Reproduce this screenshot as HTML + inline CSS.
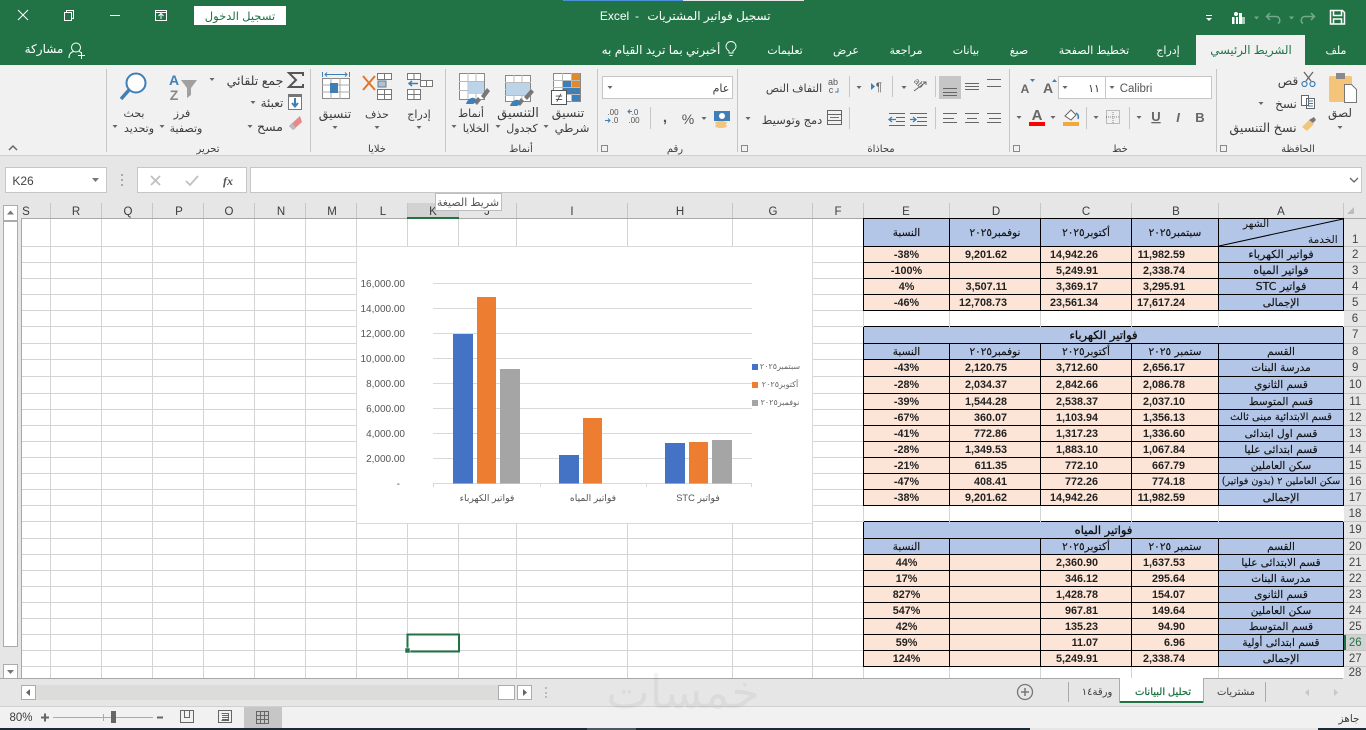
<!DOCTYPE html>
<html lang="ar"><head><meta charset="utf-8"><title>Excel</title>
<style>
html,body{margin:0;padding:0;width:1366px;height:730px;overflow:hidden;background:#e6e6e6}
body{position:relative;font-family:"Liberation Sans","DejaVu Sans",sans-serif}
svg{position:absolute;left:0;top:0}
svg text{font-family:"Liberation Sans","DejaVu Sans",sans-serif;font-size:11px;fill:#3c3c3c;text-anchor:middle;direction:rtl}
svg .w text,svg text.w{fill:#fff}
svg .g text{font-size:10px;fill:#555}
#wrap{position:absolute;left:863px;top:218px;width:503px;height:460px;overflow:hidden}
table{border-collapse:collapse;table-layout:fixed;width:503px;position:absolute;left:0;top:0}
td{padding:0;border:1px solid #000;text-align:center;overflow:hidden;white-space:nowrap;font-size:10.5px;line-height:12px;color:#111;vertical-align:middle}
td.h{background:#b4c6e7;font-family:"DejaVu Sans",sans-serif;-webkit-text-stroke:.15px #111}
td.n{background:#fce4d6;text-align:right;padding-right:33px;font:bold 10.8px/12px "Liberation Sans",sans-serif;color:#222}
td.p{background:#fce4d6;font:bold 10.8px/12px "Liberation Sans",sans-serif;color:#222}
td.e{background:#fce4d6}
td.b{background:#fff;border:none;border-left:1px solid #d4d4d4}
td.r{background:#e6e6e6;border:none;border-bottom:1px solid #c6c6c6;font:11.5px/12px "Liberation Sans",sans-serif;color:#444}
td.s{background:#d2d2d2;color:#217346;box-shadow:inset 2px 0 0 #217346}
td.t{font-size:11.5px;-webkit-text-stroke:.35px #111}
.o{position:absolute;font:10.5px/12px "DejaVu Sans",sans-serif;color:#111;white-space:nowrap}
</style></head><body>
<svg width="1366" height="730" viewBox="0 0 1366 730" xmlns="http://www.w3.org/2000/svg">
<defs><path id="c" d="M-2.5 0h5l-2.5 3z" fill="#666"/></defs>
<!-- title bar -->
<rect width="1366" height="65" fill="#217346"/>
<rect x="563" width="120" height="1" fill="#4a90d9"/><rect x="683" width="121" height="1" fill="#e6e6e6"/>
<rect x="1196" y="35" width="109" height="30" fill="#f1f1f1"/>
<rect x="194" y="6" width="92" height="19" fill="#fff"/>
<text x="240" y="20" style="fill:#217346;font-size:11.5px">تسجيل الدخول</text>
<text x="709" y="20" class="w" style="font-size:12px">تسجيل فواتير المشتريات</text><text x="637" y="20" class="w" style="font-size:12px">-</text><text x="614.500" y="20" class="w" style="font-size:12px;direction:ltr">Excel</text>
<g class="w">
<text x="1336" y="54">ملف</text><text x="1168" y="54">إدراج</text><text x="1094" y="54">تخطيط الصفحة</text><text x="1019" y="54">صيغ</text><text x="966" y="54">بيانات</text><text x="906" y="54">مراجعة</text><text x="846" y="54">عرض</text><text x="785" y="54">تعليمات</text><text x="661" y="54" style="font-size:12px">أخبرني بما تريد القيام به</text><text x="44" y="53" style="font-size:12px">مشاركة</text>
</g>
<text x="1251" y="54" style="fill:#217346;font-size:11.700px">الشريط الرئيسي</text>
<g fill="none" stroke="#fff" stroke-width="1">
<path d="M18 10l10 10M28 10l-10 10"/>
<path d="M64.500 12.500h7v8h-7zM66.500 12.500v-2h7v8h-2"/>
<path d="M110 15.500h10"/>
<path d="M155.500 10.500h11v10h-11zM155.500 12.500h11M161 19v-5M158.500 16l2.500-2.500 2.500 2.500"/>
<path d="M1330.500 10.500h12l2 2v11.500h-14zM1333.500 10.500v5h8v-5M1333.500 24v-5h8v5" stroke-width="1.500"/>
<path d="M1270 13l-3.500 3.500 3.500 3.500M1267 16.500h9c4 0 5 5 2 7" stroke="#74a98c" stroke-width="1.500"/>
<path d="M1311 13l3.500 3.500-3.500 3.500M1314 16.500h-9c-4 0-5 5-2 7" stroke="#74a98c" stroke-width="1.500"/>
<path d="M729 53v-2c-1.500-1-3-2.500-3-4.500a5 5 0 0 1 10 0c0 2-1.500 3.500-3 4.500v2zM729.500 55.500h3" stroke-width=".9"/>
<circle cx="76" cy="47.500" r="4.500"/><path d="M69 58c0-4 2-6 5-6.500M79 51.500c1 .3 2 1 2.500 1.500M78 55.500h7M81.500 52v7"/>
</g>
<g fill="#fff">
<rect x="1239" y="13" width="3" height="11"/><rect x="1242" y="17" width="3" height="7" fill="#a8c9b6"/><rect x="1232" y="17" width="2.500" height="7"/><circle cx="1236" cy="14" r="2"/><rect x="1236" y="17" width="2" height="7"/>
<path d="M1206 18h6l-3 3z"/><rect x="1206" y="15" width="6" height="1"/>
<path d="M1254 16.500h5l-2.500 3zM1289 16.500h5l-2.500 3z" fill="#74a98c"/>
</g>
<!-- ribbon -->
<rect y="65" width="1366" height="91" fill="#f1f1f1"/>
<rect y="155" width="1366" height="1" fill="#d0d0d0"/>
<path d="M106.500 69v83M310.500 69v83M445.500 69v83M597.500 69v83M737.500 69v83M1009.500 69v83M1216.500 69v83" stroke="#c6c6c6"/>
<text x="208" y="152" style="font-size:10px">تحرير</text><text x="377" y="152" style="font-size:10px">خلايا</text><text x="521" y="152" style="font-size:10px">أنماط</text><text x="675" y="152" style="font-size:10px">رقم</text><text x="881" y="152" style="font-size:10px">محاذاة</text><text x="1120" y="152" style="font-size:10px">خط</text><text x="1298" y="152" style="font-size:10px">الحافظة</text>
<path d="M9 150l4-4 4 4" fill="none" stroke="#666" stroke-width="1.500"/>
<path d="M601.500 145.500h6v6h-6zM741.500 145.500h6v6h-6zM1013.500 145.500h6v6h-6zM1220.500 145.500h6v6h-6z" fill="none" stroke="#888"/>
<!-- clipboard -->
<rect x="1329" y="76" width="23" height="26" rx="1.500" fill="#f4c47a"/><rect x="1336" y="73" width="9" height="6" fill="#8a8a8a"/>
<path d="M1344.500 84.500h7l5 5v13h-12z" fill="#fff" stroke="#777"/>
<text x="1340" y="117" style="font-size:12px">لصق</text><use href="#c" x="1340" y="126"/>
<text x="1288" y="85" style="font-size:12px">قص</text><text x="1286" y="108" style="font-size:12px">نسخ</text><use href="#c" x="1261" y="102"/><text x="1263" y="132" style="font-size:12.700px">نسخ التنسيق</text>
<path d="M1304 72l7 9M1313 72l-7 9" stroke="#666" stroke-width="1.300" fill="none"/><circle cx="1304.500" cy="84" r="2.500" fill="none" stroke="#3f7fb6" stroke-width="1.200"/><circle cx="1312.500" cy="84" r="2.500" fill="none" stroke="#3f7fb6" stroke-width="1.200"/>
<path d="M1301.500 95.500h7v10h-7zM1306.500 98.500h8v10h-8z" fill="#fff" stroke="#666"/><path d="M1308 101h5M1308 103.500h5M1308 106h5" stroke="#3f7fb6"/>
<path d="M1302 127l7-7 5 4-7 7z" fill="#f2c57c"/><path d="M1309 120l5-3 2 3-3 3z" fill="#777"/>
<!-- font -->
<rect x="1058.500" y="76.500" width="47" height="22" fill="#fff" stroke="#c6c6c6"/><rect x="1105.500" y="76.500" width="106" height="22" fill="#fff" stroke="#c6c6c6"/>
<text x="1136" y="92" style="font-size:11.500px;fill:#555">Calibri</text><text x="1094" y="92" style="font-size:11px">١١</text>
<use href="#c" x="1112" y="86"/><use href="#c" x="1065" y="86"/>
<text x="1025" y="93" style="font-size:12px;font-weight:bold;fill:#666">A</text><text x="1048" y="93" style="font-size:14px;font-weight:bold;fill:#666">A</text>
<path d="M1030 82l2.500-3 2.500 3z" fill="#3f7fb6" transform="rotate(180 1032.500 80.500)"/><path d="M1052 82l2.500-3 2.500 3z" fill="#3f7fb6"/>
<text x="1200" y="122" style="font-size:13px;font-weight:bold;fill:#666">B</text><text x="1178" y="122" style="font-size:13px;font-style:italic;font-weight:bold;fill:#666">I</text><text x="1156" y="121" style="font-size:13px;font-weight:bold;fill:#666;text-decoration:underline">U</text>
<use href="#c" x="1139" y="116"/><use href="#c" x="1096" y="116"/><use href="#c" x="1053" y="116"/><use href="#c" x="1019" y="116"/>
<path d="M1129.500 107v22M1086.500 107v22" stroke="#c6c6c6"/>
<rect x="1106.500" y="110.500" width="13" height="13" fill="none" stroke="#888" stroke-dasharray="1 1"/><path d="M1113 110v13M1106 117h13" stroke="#888" stroke-dasharray="1 1"/>
<path d="M1065 116l6-6 5 5-5 5z" fill="#fff" stroke="#666"/><path d="M1076 113c2 1 3 3 2 6" stroke="#3f7fb6" stroke-width="1.500" fill="none"/><rect x="1063" y="122" width="16" height="4" fill="#f2a93b"/>
<text x="1037" y="120" style="font-size:15px;font-weight:bold;fill:#666">A</text><rect x="1029" y="122" width="16" height="4" fill="#f00"/>
<!-- alignment -->
<rect x="939" y="76" width="22" height="23" fill="#c6c6c6"/>
<path d="M987 79.500h14M987 86.500h14M965 83.500h14M965 86.500h14M965 89.500h14M943 88.500h14M943 92.500h14M943 95.500h14" stroke="#666"/>
<path d="M987 113.500h14M989 118.500h12M987 122.500h14M965 113.500h14M967 118.500h10M965 122.500h14M943 113.500h14M943 118.500h11M943 122.500h14" stroke="#666"/>
<path d="M935.500 76v21M935.500 107v22M892.500 76v21M849.500 76v21M849.500 107v22" stroke="#c6c6c6"/>
<text x="919" y="86" transform="rotate(45 919 83)" style="font-size:9px;fill:#666;direction:ltr">ab</text><path d="M914 91l12-9M923 82h3v3" fill="none" stroke="#666"/>
<use href="#c" x="904" y="86"/><use href="#c" x="859" y="86"/><use href="#c" x="748" y="117"/>
<path d="M871 83l4 3.500-4 3.500z" fill="#3f7fb6"/><text x="879" y="91" style="font-size:12px;fill:#666;direction:ltr">¶</text>
<text x="794" y="92" style="font-size:11px">التفاف النص</text>
<text x="792" y="124" style="font-size:11.500px">دمج وتوسيط</text>
<text x="833" y="85" style="font-size:9px;fill:#555">ab</text><text x="831" y="93" style="font-size:9px;fill:#555">c</text><path d="M838 88v4h-3" fill="none" stroke="#3f7fb6"/>
<rect x="827.500" y="110.500" width="14" height="14" fill="none" stroke="#666"/><path d="M828 114.500h13M828 120.500h13" stroke="#666"/><path d="M830 117.500h9" stroke="#3f7fb6"/>
<path d="M910 113.500h17M917 117.500h10M917 121.500h10M910 125.500h17M889 113.500h16M896 117.500h9M896 121.500h9M889 125.500h16" stroke="#666"/>
<path d="M910 119.500h6M913 117l3 2.500-3 2.500M896 119.500h-7M892 117l-3 2.500 3 2.500" stroke="#3f7fb6" stroke-width="1.300" fill="none"/>
<!-- number -->
<rect x="602.500" y="76.500" width="130" height="22" fill="#fff" stroke="#c6c6c6"/><use href="#c" x="610" y="86"/><text x="721" y="92">عام</text>
<rect x="714" y="111" width="16" height="10" fill="#3f7fb6"/><circle cx="722" cy="116" r="3" fill="#fff"/><ellipse cx="721" cy="123" rx="6" ry="2" fill="#f2c57c"/><ellipse cx="721" cy="126" rx="6" ry="2" fill="#f2c57c"/>
<use href="#c" x="704" y="117"/>
<text x="688" y="124" style="font-size:14px;fill:#555">%</text><text x="665" y="122" style="font-size:15px;font-weight:bold;fill:#555">,</text>
<path d="M650.500 107v22" stroke="#c6c6c6"/>
<text x="635" y="115" style="font-size:8px;fill:#555;direction:ltr">.0</text><text x="634" y="123" style="font-size:8px;fill:#555;direction:ltr">.00</text><text x="613" y="115" style="font-size:8px;fill:#555;direction:ltr">.00</text><text x="615" y="123" style="font-size:8px;fill:#555;direction:ltr">.0</text>
<path d="M632 111.500h-4M630 109.500l-2 2 2 2M605 120.500h5M608 118.500l2 2-2 2" stroke="#3f7fb6" fill="none"/>
<!-- styles -->
<g fill="#fff" stroke="#888"><rect x="553.500" y="73.500" width="27" height="28"/><rect x="505.500" y="75.500" width="25" height="26"/><rect x="459.500" y="73.500" width="25" height="26"/></g>
<path d="M553 80.500h27M553 87.500h27M553 94.500h27M562.500 73v29M571.500 73v29M505 82.500h26M505 89.500h26M505 95.500h26M514 75v27M522 75v27M459 81.500h25M459 90.500h25M468 73v26M476 73v26" stroke="#bbb"/>
<rect x="563" y="81" width="8" height="6" fill="#3f7fb6"/><rect x="572" y="73" width="8" height="7" fill="#e08a2e"/><rect x="572" y="81" width="8" height="6" fill="#e08a2e"/><rect x="563" y="88" width="17" height="6" fill="#3f7fb6"/><rect x="572" y="95" width="8" height="6" fill="#3f7fb6"/>
<rect x="551.500" y="90.500" width="15" height="14" fill="#fff" stroke="#555"/><text x="559" y="102" style="font-size:13px;fill:#444">≠</text>
<rect x="506" y="83" width="24" height="12" fill="#bcd3e8"/><rect x="468" y="82" width="16" height="12" fill="#bcd3e8"/>
<path d="M517 103l4-5 3 3-4 5zM524 97l7-8 3 3-7 8z" fill="#777"/><path d="M510 106c1-4 5-7 8-6s2 5-1 6z" fill="#3f7fb6"/>
<path d="M474 102l4-5 3 3-4 5zM481 96l6-8 3 3-6 8z" fill="#777"/><path d="M466 104c1-4 5-7 8-6s2 5-1 6z" fill="#3f7fb6"/>
<text x="568" y="117" style="font-size:12.500px">تنسيق</text><text x="572" y="132" style="font-size:11.500px">شرطي</text><use href="#c" x="546" y="125"/>
<text x="518" y="117" style="font-size:13px">التنسيق</text><text x="522" y="132">كجدول</text><use href="#c" x="498" y="125"/>
<text x="471" y="117">أنماط</text><text x="476" y="132">الخلايا</text><use href="#c" x="454" y="125"/>
<!-- cells -->
<path d="M407.500 73.500h13v6h-13zM414 73v6M407.500 89.500h13v10h-13zM414 89v11M407 94.500h14M420.500 80.500h12v6h-12zM426.500 80v7" fill="#fff" stroke="#777"/>
<path d="M418 83.500h-8M412 81l-3 2.500 3 2.500" stroke="#3f7fb6" stroke-width="1.500" fill="none"/>
<text x="419" y="118">إدراج</text><use href="#c" x="419" y="126"/>
<path d="M377.500 73.500h14v6h-14zM384.500 73v6M377.500 89.500h14v10h-14zM384.500 89v11M377 94.500h15" fill="#fff" stroke="#777"/><rect x="378" y="81" width="8" height="6" fill="#a9c3df" stroke="#777"/>
<path d="M363 76l12 14M375 76l-12 14" stroke="#e0762b" stroke-width="2"/>
<text x="377" y="118">حذف</text><use href="#c" x="377" y="126"/>
<rect x="322.500" y="78.500" width="27" height="20" fill="#fff" stroke="#888"/><path d="M322 85h28M322 92h28M331 78v21M340 78v21" stroke="#aaa"/><rect x="330" y="83" width="8" height="10" fill="#3f7fb6"/>
<path d="M322.500 72v5M349.500 72v5M325 74.500h22M327 72.500l-2 2 2 2M345 72.500l2 2-2 2" stroke="#3f7fb6" fill="none"/>
<text x="335" y="118" style="font-size:12.500px">تنسيق</text><use href="#c" x="335" y="126"/>
<!-- editing -->
<path d="M303 76v-3h-14l7 7-7 7h14v-3" fill="none" stroke="#555" stroke-width="2"/>
<text x="255" y="85" style="font-size:12.500px">جمع تلقائي</text><use href="#c" x="212" y="78"/>
<rect x="288.500" y="94.500" width="13" height="15" fill="#fff" stroke="#777"/><path d="M295 98v8M292 103l3 3.500 3-3.500" stroke="#3f7fb6" stroke-width="2" fill="none"/><rect x="289" y="95" width="12" height="2" fill="#777"/>
<text x="272" y="107" style="font-size:12px">تعبئة</text><use href="#c" x="253" y="101"/>
<path d="M289 126l11-10 2 6-9 8z" fill="#e58a8a"/><path d="M289 126l4 4 3-2-4-5z" fill="#bbb"/>
<text x="270" y="131" style="font-size:12.500px">مسح</text><use href="#c" x="250" y="125"/>
<text x="174" y="85" style="font-size:14px;font-weight:bold;fill:#3f7fb6">A</text><text x="174" y="100" style="font-size:14px;font-weight:bold;fill:#888">Z</text>
<path d="M181 80h16l-6 8v7l-4 3v-10z" fill="#a0a0a0"/>
<text x="182" y="117">فرز</text><text x="186" y="132">وتصفية</text><use href="#c" x="162" y="125"/>
<circle cx="136" cy="83" r="9.500" fill="#fff" stroke="#3f7fb6" stroke-width="2"/><path d="M129 90l-8 9" stroke="#3f7fb6" stroke-width="3.500"/>
<text x="134" y="117">بحث</text><text x="139" y="132">وتحديد</text><use href="#c" x="115" y="125"/>
<!-- formula bar -->
<rect x="5.500" y="167.500" width="101" height="25" fill="#fff" stroke="#c6c6c6"/><text x="23" y="185" style="font-size:12px;fill:#444;direction:ltr">K26</text><path d="M92 178h7l-3.500 4z" fill="#777"/>
<path d="M122 174v2M122 179v2M122 184v2" stroke="#aaa" stroke-width="2"/>
<rect x="137.500" y="167.500" width="109" height="25" fill="#fff" stroke="#c6c6c6"/>
<path d="M151 176l9 9M160 176l-9 9" stroke="#c0c0c0" stroke-width="1.800"/><path d="M186 181l4 4 8-9" stroke="#c0c0c0" stroke-width="1.800" fill="none"/>
<text x="228" y="185" style="font:italic bold 12px 'Liberation Serif',serif;fill:#555;direction:ltr">fx</text>
<rect x="250.500" y="167.500" width="1111" height="25" fill="#fff" stroke="#c6c6c6"/>
<path d="M1350 178l4 4 4-4" fill="none" stroke="#666" stroke-width="1.300"/>
<!-- grid -->
<rect x="21" y="219" width="842" height="459" fill="#fff"/>
<path stroke="#d4d4d4" fill="none" d="M21 246.500H863M21 262.500H863M21 278.500H863M21 294.500H863M21 310.500H863M21 326.500H863M21 343.500H863M21 359.500H863M21 376.500H863M21 393.500H863M21 409.500H863M21 425.500H863M21 441.500H863M21 457.500H863M21 473.500H863M21 489.500H863M21 505.500H863M21 521.500H863M21 538.500H863M21 554.500H863M21 570.500H863M21 586.500H863M21 602.500H863M21 618.500H863M21 634.500H863M21 650.500H863M21 666.500H863M50.500 219V678M101.500 219V678M152.500 219V678M203.500 219V678M254.500 219V678M305.500 219V678M356.500 219V678M407.500 219V678M458.500 219V678M516.500 219V678M627.500 219V678M732.500 219V678M812.500 219V678"/>
<!-- col headers -->
<rect x="407" y="203" width="51" height="15" fill="#d2d2d2"/>
<path stroke="#c6c6c6" d="M50.500 203v15M101.500 203v15M152.500 203v15M203.500 203v15M254.500 203v15M305.500 203v15M356.500 203v15M407.500 203v15M458.500 203v15M516.500 203v15M627.500 203v15M732.500 203v15M812.500 203v15M863.500 203v15M949.500 203v15M1040.500 203v15M1131.500 203v15M1218.500 203v15M1343.500 203v15"/>
<path d="M21 218.500H1366M21.500 218V678" stroke="#a8a8a8"/>
<rect x="407" y="217" width="52" height="2" fill="#217346"/>
<text x="26" y="215" style="font-size:11.500px;direction:ltr">S</text><text x="76" y="215" style="font-size:11.500px">R</text><text x="128" y="215" style="font-size:11.500px">Q</text><text x="179" y="215" style="font-size:11.500px">P</text><text x="229" y="215" style="font-size:11.500px">O</text><text x="281" y="215" style="font-size:11.500px">N</text><text x="332" y="215" style="font-size:11.500px">M</text><text x="383" y="215" style="font-size:11.500px">L</text><text x="433" y="215" style="font-size:11.500px">K</text><text x="487" y="215" style="font-size:11.500px">J</text><text x="572" y="215" style="font-size:11.500px">I</text><text x="680" y="215" style="font-size:11.500px">H</text><text x="773" y="215" style="font-size:11.500px">G</text><text x="838" y="215" style="font-size:11.500px">F</text><text x="906" y="215" style="font-size:11.500px">E</text><text x="996" y="215" style="font-size:11.500px">D</text><text x="1086" y="215" style="font-size:11.500px">C</text><text x="1176" y="215" style="font-size:11.500px">B</text><text x="1281" y="215" style="font-size:11.500px">A</text>
<path d="M1354 207v7h-7z" fill="#bcbcbc"/>
<!-- chart -->
<rect x="356.500" y="246.500" width="456" height="277" fill="#fff" stroke="#d9d9d9"/>
<path stroke="#d9d9d9" d="M433 283.500H752M433 308.500H752M433 333.500H752M433 358.500H752M433 383.500H752M433 408.500H752M433 433.500H752M433 458.500H752M433 483.500H752M433.500 483v4M540.500 483v4M646.500 483v4M751.500 483v4"/>
<rect x="453" y="334" width="20" height="149.500" fill="#4472c4"/><rect x="477" y="297" width="19" height="186.500" fill="#ed7d31"/><rect x="500" y="369" width="20" height="114.500" fill="#a5a5a5"/>
<rect x="559" y="455" width="20" height="28.500" fill="#4472c4"/><rect x="583" y="418" width="19" height="65.500" fill="#ed7d31"/>
<rect x="665" y="443" width="20" height="40.500" fill="#4472c4"/><rect x="689" y="442" width="19" height="41.500" fill="#ed7d31"/><rect x="712" y="440" width="20" height="43.500" fill="#a5a5a5"/>
<g class="g">
<text x="405" y="287" style="text-anchor:end;direction:ltr">16,000.00</text><text x="405" y="312" style="text-anchor:end;direction:ltr">14,000.00</text><text x="405" y="337" style="text-anchor:end;direction:ltr">12,000.00</text><text x="405" y="362" style="text-anchor:end;direction:ltr">10,000.00</text><text x="405" y="387" style="text-anchor:end;direction:ltr">8,000.00</text><text x="405" y="412" style="text-anchor:end;direction:ltr">6,000.00</text><text x="405" y="437" style="text-anchor:end;direction:ltr">4,000.00</text><text x="405" y="462" style="text-anchor:end;direction:ltr">2,000.00</text><text x="400" y="487" style="text-anchor:end;direction:ltr">-</text>
<text x="487" y="501" style="font-size:9.300px">فواتير الكهرباء</text><text x="593" y="501" style="font-size:9.300px">فواتير المياه</text><text x="698" y="501" style="font-size:9.300px">فواتير STC</text>
</g>
<rect x="752" y="364" width="6" height="6" fill="#4472c4"/><rect x="752" y="382" width="6" height="6" fill="#ed7d31"/><rect x="752" y="400" width="6" height="6" fill="#a5a5a5"/>
<text x="780" y="369" style="font-size:8px;fill:#666">سبتمبر٢٠٢٥</text><text x="780" y="387" style="font-size:8px;fill:#666">أكتوبر٢٠٢٥</text><text x="780" y="405" style="font-size:8px;fill:#666">نوفمبر٢٠٢٥</text>
<!-- selection -->
<rect x="407.500" y="634.500" width="51.500" height="17" fill="none" stroke="#217346" stroke-width="2"/>
<rect x="405" y="648" width="5" height="5" fill="#217346" stroke="#fff" stroke-width=".5"/>
<!-- tooltip -->
<rect x="435.500" y="193.500" width="66" height="17" fill="#fff" stroke="#bdbdbd"/>
<text x="468" y="206" style="font-size:11px;fill:#555">شريط الصيغة</text>
<!-- v scroll -->
<rect x="3.500" y="205.500" width="14" height="15" fill="#fff" stroke="#ababab"/><path d="M7 214.500l3.500-4 3.500 4z" fill="#777"/>
<rect x="3.500" y="221.500" width="14" height="425" fill="#fff" stroke="#ababab"/>
<rect x="3.500" y="664.500" width="14" height="14" fill="#fff" stroke="#ababab"/><path d="M7 670l3.500 4 3.500-4z" fill="#777"/>
<!-- bottom -->
<path d="M0 678.500H1343" stroke="#a8a8a8"/>
<rect x="21.500" y="685.500" width="14" height="14" fill="#fff" stroke="#ababab"/><path d="M30 689l-4 3.500 4 3.500z" fill="#666"/>
<rect x="36" y="685" width="462" height="15" fill="#dcdcda"/>
<rect x="498.500" y="685.500" width="16" height="14" fill="#fff" stroke="#ababab"/>
<rect x="517.500" y="685.500" width="14" height="14" fill="#fff" stroke="#ababab"/><path d="M523 689l4 3.500-4 3.500z" fill="#666"/>
<path d="M546 687v2M546 692v2M546 696v2" stroke="#bbb" stroke-width="2"/>
<rect x="1119" y="678" width="84" height="25" fill="#fff"/><rect x="1119" y="701" width="84" height="2" fill="#217346"/>
<path d="M1119.500 678v25M1203.500 678v25" stroke="#ababab"/>
<text x="1163" y="695" style="font-size:10px;fill:#217346;stroke:#217346;stroke-width:.25">تحليل البيانات</text>
<text x="1236" y="695" style="font-size:10px">مشتريات</text>
<text x="1097" y="695" style="font-size:10px">ورقة١٤</text>
<path d="M1265.500 682v20M1068.500 682v20" stroke="#aaa"/>
<circle cx="1025" cy="692" r="7.500" fill="none" stroke="#777" stroke-width="1.300"/><path d="M1021 692h8M1025 688v8" stroke="#777" stroke-width="1.500"/>
<path d="M1309 689l-4 3.500 4 3.500zM1334 689l4 3.500-4 3.500z" fill="#c6c6c6"/>
<rect y="706" width="1366" height="22" fill="#f1f1f1"/><rect y="706" width="1366" height="1" fill="#d0d0d0"/>
<text x="683" y="708" style="font-size:46px;fill:#000;opacity:.045">خمسات</text>
<text x="21" y="721" style="font-size:11.500px;direction:ltr">80%</text>
<path d="M41 717.500h8M45 713.500v8" stroke="#666" stroke-width="2"/>
<path d="M53 717.500H153" stroke="#aaa"/><path d="M103.500 714v7" stroke="#aaa"/><rect x="111" y="711" width="5" height="12" fill="#666"/>
<path d="M157 717.500h6" stroke="#666" stroke-width="2"/>
<path d="M180.500 710.500h13v12h-13zM184.500 710.500v7h5v-7" fill="none" stroke="#666"/>
<path d="M218.500 710.500h13v12h-13zM221.500 713.500h7v7h-7M222 715.500h6M222 717.500h6M222 719.500h6" fill="none" stroke="#666"/>
<rect x="244" y="707" width="38" height="21" fill="#c6c6c6"/>
<path d="M256.500 711.500h12v12h-12zM260.500 711v12M264.500 711v12M256 715.500h13M256 719.500h13" fill="none" stroke="#666"/>
<text x="1349" y="722" style="font-size:10.500px">جاهز</text>
<rect y="728" width="1366" height="2" fill="#1c2b33"/><rect x="587" y="728" width="49" height="2" fill="#4a5a60"/><rect x="1030" y="728" width="288" height="2" fill="#e6e6e6"/>
</svg>
<div id="wrap"><table>
<colgroup><col style="width:86px"><col style="width:91px"><col style="width:91px"><col style="width:87px"><col style="width:125px"><col style="width:23px"></colgroup>
<tr style="height:28px"><td class="h" dir="rtl">النسبة</td><td class="h" dir="rtl">نوفمبر٢٠٢٥</td><td class="h" dir="rtl">أكتوبر٢٠٢٥</td><td class="h" dir="rtl">سبتمبر٢٠٢٥</td><td class="h"></td><td class="r" style="vertical-align:bottom">1</td></tr>
<tr style="height:16px"><td class="p">-38%</td><td class="n">9,201.62</td><td class="n">14,942.26</td><td class="n">11,982.59</td><td class="h" dir="rtl" style="font-size:11px">فواتير الكهرباء</td><td class="r">2</td></tr>
<tr style="height:16px"><td class="p">-100%</td><td class="e"></td><td class="n">5,249.91</td><td class="n">2,338.74</td><td class="h" dir="rtl" style="font-size:11px">فواتير المياه</td><td class="r">3</td></tr>
<tr style="height:16px"><td class="p">4%</td><td class="n">3,507.11</td><td class="n">3,369.17</td><td class="n">3,295.91</td><td class="h" dir="rtl" style="font-size:11px">فواتير STC</td><td class="r">4</td></tr>
<tr style="height:16px"><td class="p">-46%</td><td class="n">12,708.73</td><td class="n">23,561.34</td><td class="n">17,617.24</td><td class="h" dir="rtl">الإجمالى</td><td class="r">5</td></tr>
<tr style="height:16px"><td class="b"></td><td class="b"></td><td class="b"></td><td class="b"></td><td class="b"></td><td class="r">6</td></tr>
<tr style="height:17px"><td class="h t" colspan="5" dir="rtl">فواتير الكهرباء</td><td class="r">7</td></tr>
<tr style="height:16px"><td class="h" dir="rtl">النسبة</td><td class="h" dir="rtl">نوفمبر٢٠٢٥</td><td class="h" dir="rtl">أكتوبر٢٠٢٥</td><td class="h" dir="rtl">ستمبر ٢٠٢٥</td><td class="h" dir="rtl">القسم</td><td class="r">8</td></tr>
<tr style="height:17px"><td class="p">-43%</td><td class="n">2,120.75</td><td class="n">3,712.60</td><td class="n">2,656.17</td><td class="h" dir="rtl">مدرسة البنات</td><td class="r">9</td></tr>
<tr style="height:17px"><td class="p">-28%</td><td class="n">2,034.37</td><td class="n">2,842.66</td><td class="n">2,086.78</td><td class="h" dir="rtl">قسم الثانوي</td><td class="r">10</td></tr>
<tr style="height:16px"><td class="p">-39%</td><td class="n">1,544.28</td><td class="n">2,538.37</td><td class="n">2,037.10</td><td class="h" dir="rtl">قسم المتوسط</td><td class="r">11</td></tr>
<tr style="height:16px"><td class="p">-67%</td><td class="n">360.07</td><td class="n">1,103.94</td><td class="n">1,356.13</td><td class="h" dir="rtl" style="font-size:10px">قسم الابتدائية مبنى ثالث</td><td class="r">12</td></tr>
<tr style="height:16px"><td class="p">-41%</td><td class="n">772.86</td><td class="n">1,317.23</td><td class="n">1,336.60</td><td class="h" dir="rtl">قسم اول ابتدائى</td><td class="r">13</td></tr>
<tr style="height:16px"><td class="p">-28%</td><td class="n">1,349.53</td><td class="n">1,883.10</td><td class="n">1,067.84</td><td class="h" dir="rtl">قسم ابتدائى عليا</td><td class="r">14</td></tr>
<tr style="height:16px"><td class="p">-21%</td><td class="n">611.35</td><td class="n">772.10</td><td class="n">667.79</td><td class="h" dir="rtl">سكن العاملين</td><td class="r">15</td></tr>
<tr style="height:16px"><td class="p">-47%</td><td class="n">408.41</td><td class="n">772.26</td><td class="n">774.18</td><td class="h" dir="rtl" style="font-size:9.500px">سكن العاملين ٢ (بدون فواتير)</td><td class="r">16</td></tr>
<tr style="height:16px"><td class="p">-38%</td><td class="n">9,201.62</td><td class="n">14,942.26</td><td class="n">11,982.59</td><td class="h" dir="rtl">الإجمالى</td><td class="r">17</td></tr>
<tr style="height:16px"><td class="b"></td><td class="b"></td><td class="b"></td><td class="b"></td><td class="b"></td><td class="r">18</td></tr>
<tr style="height:17px"><td class="h t" colspan="5" dir="rtl">فواتير المياه</td><td class="r">19</td></tr>
<tr style="height:16px"><td class="h" dir="rtl">النسبة</td><td class="h"></td><td class="h" dir="rtl">أكتوبر٢٠٢٥</td><td class="h" dir="rtl">ستمبر ٢٠٢٥</td><td class="h" dir="rtl">القسم</td><td class="r">20</td></tr>
<tr style="height:16px"><td class="p">44%</td><td class="e"></td><td class="n">2,360.90</td><td class="n">1,637.53</td><td class="h" dir="rtl">قسم الابتدائى عليا</td><td class="r">21</td></tr>
<tr style="height:16px"><td class="p">17%</td><td class="e"></td><td class="n">346.12</td><td class="n">295.64</td><td class="h" dir="rtl">مدرسة البنات</td><td class="r">22</td></tr>
<tr style="height:16px"><td class="p">827%</td><td class="e"></td><td class="n">1,428.78</td><td class="n">154.07</td><td class="h" dir="rtl">قسم الثانوى</td><td class="r">23</td></tr>
<tr style="height:16px"><td class="p">547%</td><td class="e"></td><td class="n">967.81</td><td class="n">149.64</td><td class="h" dir="rtl">سكن العاملين</td><td class="r">24</td></tr>
<tr style="height:16px"><td class="p">42%</td><td class="e"></td><td class="n">135.23</td><td class="n">94.90</td><td class="h" dir="rtl">قسم المتوسط</td><td class="r">25</td></tr>
<tr style="height:16px"><td class="p">59%</td><td class="e"></td><td class="n">11.07</td><td class="n">6.96</td><td class="h" dir="rtl">قسم ابتدائى أولية</td><td class="r s">26</td></tr>
<tr style="height:16px"><td class="p">124%</td><td class="e"></td><td class="n">5,249.91</td><td class="n">2,338.74</td><td class="h" dir="rtl">الإجمالى</td><td class="r">27</td></tr>
<tr style="height:12px"><td class="b"></td><td class="b"></td><td class="b"></td><td class="b"></td><td class="b"></td><td class="r" style="border:none">28</td></tr>
</table></div>
<svg width="1366" height="730" viewBox="0 0 1366 730" style="pointer-events:none"><path d="M1219 246L1343 219" stroke="#000"/></svg>
<span class="o" style="left:1243px;top:218px">الشهر</span>
<span class="o" style="left:1308px;top:234px">الخدمة</span>
</body></html>
